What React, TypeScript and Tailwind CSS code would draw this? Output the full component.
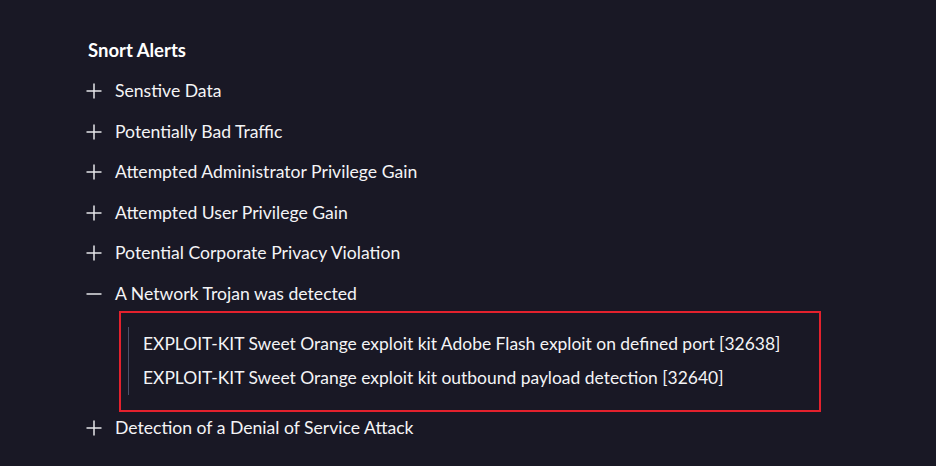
import React from "react";

const alerts = [
  { label: "Senstive Data", open: false },
  { label: "Potentially Bad Traffic", open: false },
  { label: "Attempted Administrator Privilege Gain", open: false },
  { label: "Attempted User Privilege Gain", open: false },
  { label: "Potential Corporate Privacy Violation", open: false },
  {
    label: "A Network Trojan was detected",
    open: true,
    rules: [
      "EXPLOIT-KIT Sweet Orange exploit kit Adobe Flash exploit on defined port [32638]",
      "EXPLOIT-KIT Sweet Orange exploit kit outbound payload detection [32640]",
    ],
  },
  { label: "Detection of a Denial of Service Attack", open: false },
];

function Icon({ open }: { open: boolean }) {
  return (
    <svg width="16" height="16" viewBox="0 0 16 16" className="shrink-0">
      <path d="M0.5 8H15.5" stroke="#e6e6ea" strokeWidth="1.5" />
      {!open && <path d="M8 0.5V15.5" stroke="#e6e6ea" strokeWidth="1.5" />}
    </svg>
  );
}

export default function App() {
  return (
    <div
      className="w-[936px] h-[466px] bg-[#191825] text-[#f4f4f6] overflow-hidden pl-[86px] pt-[38px]"
      style={{ fontFamily: "Lato, 'Open Sans', sans-serif" }}
    >
      <h2 className="text-[18.5px] font-bold leading-6 pl-[2px] text-white">
        Snort Alerts
      </h2>
      <ul className="mt-[9px] flex flex-col">
        {alerts.map((a) => (
          <li key={a.label}>
            <div className="flex items-center gap-[13px] h-[40.5px] text-[17.6px]">
              <Icon open={a.open} />
              <span>{a.label}</span>
            </div>
            {a.rules && (
              <div className="ml-[33px] mt-[-3px] mb-[-4px] w-[702px] border-[2.5px] border-[#e3212d] pl-[7px] pt-[14px] pb-[15px]">
                <div className="border-l border-[#4b5068] pl-[14px] flex flex-col">
                  {a.rules.map((r) => (
                    <div key={r} className="h-[34px] flex items-center text-[17.45px]">
                      {r}
                    </div>
                  ))}
                </div>
              </div>
            )}
          </li>
        ))}
      </ul>
    </div>
  );
}
